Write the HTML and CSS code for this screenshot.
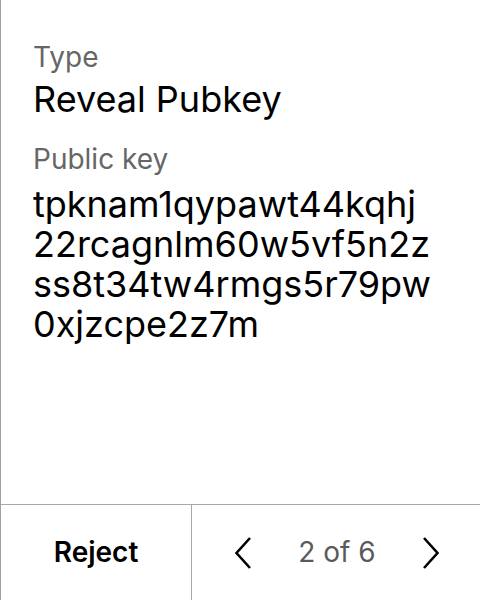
FILE: index.html
```html
<!DOCTYPE html>
<html>
<head>
<meta charset="utf-8">
<link rel="stylesheet" href="styles.css">
</head>
<body>
<div class="screen">
  <div class="content">
    <div class="field">
      <div class="label">Type</div>
      <div class="value">Reveal Pubkey</div>
    </div>
    <div class="field">
      <div class="label">Public key</div>
      <div class="value key">tpknam1qypawt44kqhj<br>22rcagnlm60w5vf5n2z<br>ss8t34tw4rmgs5r79pw<br>0xjzcpe2z7m</div>
    </div>
  </div>
  <div class="footer">
    <div class="reject">Reject</div>
    <div class="nav">
      <svg class="chev" width="16" height="32" viewBox="0 0 16 32"><path d="M15 1 L1.5 16 L15 31" fill="none" stroke="#000" stroke-width="2.6"/></svg>
      <span class="page">2 of 6</span>
      <svg class="chev" width="16" height="32" viewBox="0 0 16 32"><path d="M1 1 L14.5 16 L1 31" fill="none" stroke="#000" stroke-width="2.6"/></svg>
    </div>
  </div>
</div>
</body>
</html>
```

FILE: styles.css
```css
* { box-sizing: border-box; }
html, body { margin: 0; padding: 0; background: #fff; }
body { font-family: Inter, "Noto Sans", sans-serif; color: #000; }
.screen {
  width: 480px;
  height: 600px;
  border-left: 1px solid #a0a0a0;
  display: flex;
  flex-direction: column;
}
.content {
  flex: 1;
  padding: 39px 32px 0 32px;
  display: flex;
  flex-direction: column;
  gap: 22px;
}
.label {
  font-size: 28px;
  line-height: 36px;
  color: #666;
}
.value {
  font-size: 36px;
  line-height: 40px;
  margin-top: 4px;
}
.key { margin-top: 7px; }
.footer {
  height: 96px;
  border-top: 1px solid #a8a8a8;
  display: flex;
}
.reject {
  width: 191px;
  border-right: 1px solid #a8a8a8;
  display: flex;
  align-items: center;
  justify-content: center;
  font-size: 28px;
  font-weight: 600;
  padding-bottom: 2px;
}
.nav {
  flex: 1;
  display: flex;
  align-items: center;
  justify-content: space-between;
  padding: 0 41px 0 43px;
}
.page {
  font-size: 28px;
  color: #5a5a5a;
  padding-bottom: 2px;
}
```
